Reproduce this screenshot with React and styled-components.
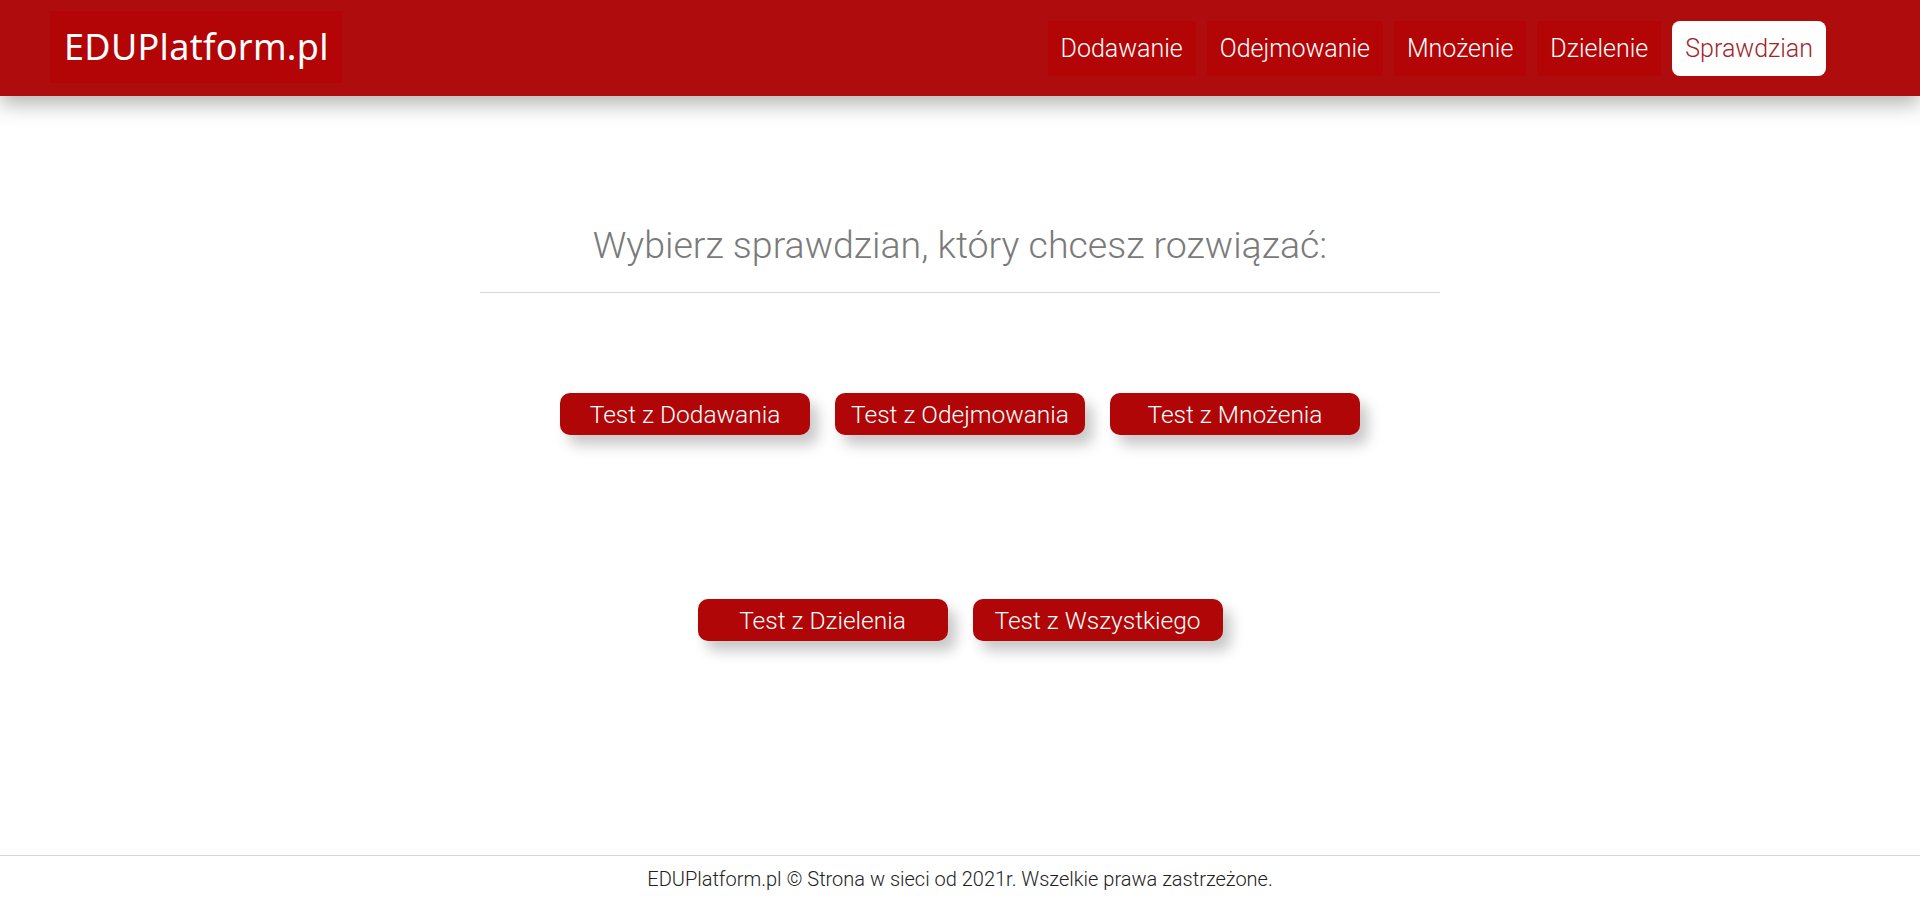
import React from 'react';
import styled, { createGlobalStyle } from 'styled-components';

const GlobalStyle = createGlobalStyle`
  html, body {
    margin: 0;
    padding: 0;
    background: #fff;
  }

  body {
    font-family: Roboto, "Liberation Sans", sans-serif;
  }
`;

const Page = styled.div`
  min-height: 902px;
  display: flex;
  flex-direction: column;
`;

const Header = styled.header`
  height: 96px;
  background: #ae0c0d;
  box-shadow: 0 8px 20px rgba(0, 0, 0, 0.3);
  display: flex;
  align-items: center;
  justify-content: space-between;
  padding: 0 94px 0 50px;
  position: relative;
  z-index: 1;
`;

const Logo = styled.a`
  height: 72px;
  width: 292px;
  box-sizing: border-box;
  padding-left: 14px;
  display: flex;
  align-items: center;
  margin-top: -3px;
  background: #b30506;
  color: #fff;
  font-family: "Noto Sans", "DejaVu Sans", sans-serif;
  font-size: 36px;
  letter-spacing: 0.3px;
  text-decoration: none;
`;

const Nav = styled.nav`
  display: flex;
  gap: 11px;
`;

const NavItem = styled.a`
  height: 55px;
  padding: 0 13px;
  display: flex;
  align-items: center;
  font-size: 25px;
  font-weight: 300;
  text-decoration: none;
  border-radius: ${(p) => (p.active ? '8px' : '0')};
  background: ${(p) => (p.active ? '#fff' : '#b40506')};
  color: ${(p) => (p.active ? '#a3252c' : '#fff')};
`;

const Main = styled.main`
  flex: 1;
  display: flex;
  flex-direction: column;
  align-items: center;
  padding-top: 123px;
`;

const Title = styled.h1`
  margin: 0;
  font-size: 37.5px;
  font-weight: 300;
  color: #7a7a7a;
  line-height: 52px;
`;

const Rule = styled.hr`
  width: 960px;
  margin: 21px 0 0;
  border: none;
  border-top: 1px solid #d8d8d8;
`;

const ButtonRow = styled.div`
  display: flex;
  gap: 25px;
  margin-top: ${(p) => p.offset}px;
`;

const TestButton = styled.button`
  width: 250px;
  height: 42px;
  border: none;
  border-radius: 10px;
  background: #b00607;
  color: #fff;
  font-family: Roboto, "Liberation Sans", sans-serif;
  font-size: 24.5px;
  font-weight: 300;
  box-shadow: 8px 10px 14px rgba(0, 0, 0, 0.22);
  cursor: pointer;
`;

const Footer = styled.footer`
  border-top: 1px solid #d6d6d6;
  height: 46px;
  display: flex;
  align-items: center;
  justify-content: center;
  font-size: 20px;
  font-weight: 300;
  color: #222;
`;

const navLinks = ['Dodawanie', 'Odejmowanie', 'Mnożenie', 'Dzielenie', 'Sprawdzian'];

const firstRow = ['Test z Dodawania', 'Test z Odejmowania', 'Test z Mnożenia'];
const secondRow = ['Test z Dzielenia', 'Test z Wszystkiego'];

const App = () => (
  <Page>
    <GlobalStyle />
    <Header>
      <Logo href="#">EDUPlatform.pl</Logo>
      <Nav>
        {navLinks.map((link) => (
          <NavItem key={link} href="#" active={link === 'Sprawdzian'}>
            {link}
          </NavItem>
        ))}
      </Nav>
    </Header>
    <Main>
      <Title>Wybierz sprawdzian, który chcesz rozwiązać:</Title>
      <Rule />
      <ButtonRow offset={100}>
        {firstRow.map((t) => (
          <TestButton key={t}>{t}</TestButton>
        ))}
      </ButtonRow>
      <ButtonRow offset={164}>
        {secondRow.map((t) => (
          <TestButton key={t}>{t}</TestButton>
        ))}
      </ButtonRow>
    </Main>
    <Footer>EDUPlatform.pl © Strona w sieci od 2021r. Wszelkie prawa zastrzeżone.</Footer>
  </Page>
);

export default App;
